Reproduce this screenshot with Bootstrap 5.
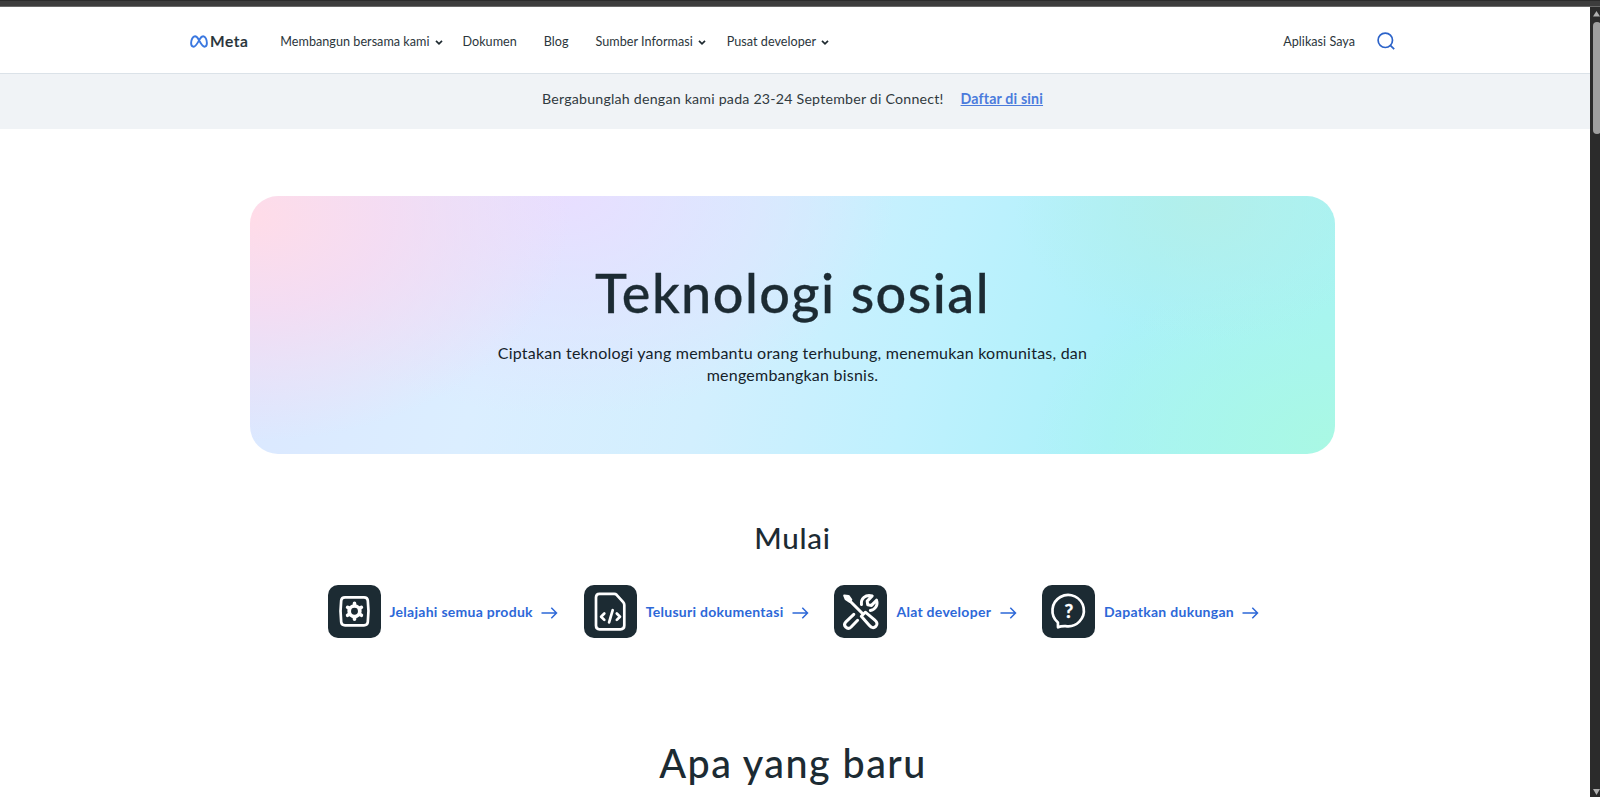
<!DOCTYPE html>
<html lang="id">
<head>
<meta charset="utf-8">
<meta name="viewport" content="width=device-width, initial-scale=1">
<title>Teknologi sosial</title>
<link href="https://cdn.jsdelivr.net/npm/bootstrap@5.3.0/dist/css/bootstrap.min.css" rel="stylesheet">
<style>
  :root { --ink: #1c2b33; --brand: #2d68d8; }
  body { font-family: Lato, "Open Sans", sans-serif; color: var(--ink); background: #fff; }
  .chrome-strip { height: 7px; flex: none; background: linear-gradient(#2b2b2b 0 1px, #3d3d3d 1px 6px, #6a6a6a 6px); }
  .site-header { height: 67px; border-bottom: 1px solid #dbe2e8; padding: 2px 195px 0 190px; }
  .wordmark { font-size: 15.6px; font-weight: 600; -webkit-text-stroke: .2px; letter-spacing: .55px; color: #273238; line-height: 20px; margin-left: 2px; }
  .site-header .nav-link { font-size: 12.6px; line-height: 20px; letter-spacing: .03px; color: #2b363c; padding: 2px 0 0; white-space: nowrap; }
  .n1 { margin-left: 32px; } .n2 { margin-left: 20px; } .n3, .n4 { margin-left: 27px; } .n5 { margin-left: 21px; }
  .chev { margin-left: 5px; }
  .search { margin-left: 22px; }
  .notice { height: 55px; background: #f0f3f6; font-size: 14.2px; letter-spacing: .215px; line-height: 20px; padding: 15px 5px 0 0; color: #303a40; }
  .notice a { color: #4b7bdc; font-weight: 700; letter-spacing: .16px; margin-left: 17px; }
  .content { padding: 67px 5px 0 0; }
  .hero { width: 1085px; height: 258px; border-radius: 28px; padding-top: 65px;
    background:
      radial-gradient(320px 225px at 0 8%, #ffdce8 0, #f9daf0cc 42%, #f0dcf500 100%),
      radial-gradient(330px 220px at 29% 0, #e8deff 0, #e4e0ffaa 42%, #e0e6ff00 100%),
      radial-gradient(190px 130px at 88% 5%, #b2efea 0, #b2efea00 100%),
      radial-gradient(300px 170px at 100% 95%, #a9f8e4 0, #a8f7e8aa 45%, #a8f3f200 100%),
      linear-gradient(105deg, #dbe8ff 4%, #dbeeff 24%, #d2effe 44%, #bff1fe 62%, #abf1f9 80%, #a8f4f2 96%); }
  .hero h1 { font-size: 54px; font-weight: 500; letter-spacing: 1.45px; line-height: 64px; margin: 0; -webkit-text-stroke: .3px; }
  .hero p { font-size: 16px; letter-spacing: .23px; line-height: 22.6px; margin: 16.5px 0 0; color: #15222a; }
  h2.start { font-size: 29.5px; font-weight: 500; letter-spacing: .8px; line-height: 36px; margin: 65.5px 0 0; }
  .quick { gap: 25.4px; margin-top: 29px; padding-left: 2px; }
  .quick a { color: var(--brand); font-size: 14px; font-weight: 700; letter-spacing: .28px; line-height: 20px; }
  .quick a > span { margin: 2px 8.5px 0 9px; }
  .quick a > svg:last-child { margin-top: 3px; }
  h2.news { font-size: 39.5px; font-weight: 500; letter-spacing: 1.45px; line-height: 48px; margin: 101.5px 0 0; padding-left: 1px; }
  .page { height: 790px; overflow: hidden; }
  .scroll-track { width: 10px; background: #2b2b2b; padding: 4px 0 2px 3px; }
  .scroll-thumb { height: 112px; width: 8px; border-radius: 4px; background: #9f9f9f; margin-top: 5px; }
</style>
</head>
<body class="overflow-hidden">
<div class="chrome-strip"></div>
<div class="page d-flex">
  <div class="flex-grow-1">
    <header class="site-header d-flex align-items-center">
      <a class="d-flex align-items-center text-decoration-none" href="#">
        <svg width="18" height="13" viewBox="0 0 18 13" fill="none" stroke="#3b78e0" stroke-width="1.9" stroke-linejoin="round"><path d="M8.8 4.9C7.7 2.8 6.6 1.3 5 1.3 2.7 1.3 1.1 4.7 1.1 8.1c0 2.2.9 3.6 2.5 3.6 1.8 0 2.9-1.7 5.2-5.8l.9-1.6C10.7 2.5 11.7 1.3 13.1 1.3c2.3 0 3.8 3.4 3.8 6.8 0 2.2-.8 3.6-2.4 3.6-1.7 0-2.7-1.5-4.8-5.1Z"/></svg>
        <span class="wordmark">Meta</span>
      </a>
      <nav class="nav flex-nowrap align-items-center">
        <a class="nav-link n1" href="#">Membangun bersama kami<svg class="chev" width="8" height="6" viewBox="0 0 8 6"><path d="M1 .8 4 3.800 7 .8" fill="none" stroke="#1f2a30" stroke-width="1.7"/></svg></a>
        <a class="nav-link n2" href="#">Dokumen</a>
        <a class="nav-link n3" href="#">Blog</a>
        <a class="nav-link n4" href="#">Sumber Informasi<svg class="chev" width="8" height="6" viewBox="0 0 8 6"><path d="M1 .8 4 3.800 7 .8" fill="none" stroke="#1f2a30" stroke-width="1.7"/></svg></a>
        <a class="nav-link n5" href="#">Pusat developer<svg class="chev" width="8" height="6" viewBox="0 0 8 6"><path d="M1 .8 4 3.800 7 .8" fill="none" stroke="#1f2a30" stroke-width="1.7"/></svg></a>
      </nav>
      <a class="nav-link ms-auto" href="#">Aplikasi Saya</a>
      <svg class="search" width="18" height="18" viewBox="0 0 18 18" fill="none" stroke="#2c63c9" stroke-width="1.7"><circle cx="8.3" cy="8.3" r="7.2"/><path d="m13.3 13.3 3.9 3.9"/></svg>
    </header>
    <div class="notice text-center"><span>Bergabunglah dengan kami pada 23-24 September di Connect!</span><a href="#">Daftar di sini</a></div>
    <main class="content d-flex flex-column align-items-center text-center">
      <section class="hero">
        <h1>Teknologi sosial</h1>
        <p>Ciptakan teknologi yang membantu orang terhubung, menemukan komunitas, dan<br>mengembangkan bisnis.</p>
      </section>
      <h2 class="start">Mulai</h2>
      <div class="quick d-flex justify-content-center">
        <a class="d-flex align-items-center text-decoration-none" href="#">
          <svg width="53" height="53" viewBox="0 0 53 53" fill="none" stroke="#fff" stroke-linejoin="round" stroke-linecap="round"><rect width="53" height="53" rx="10" fill="#1c2b33" stroke="none"/><path stroke-width="2.7" d="M17 12.300h19q3.400 0 3.800 3.200 1.400 10.800 0 21.600-.4 3.200-3.800 3.200H17q-3.400 0-3.800-3.200-1.400-10.800 0-21.600.4-3.200 3.800-3.200Z"/><circle cx="26.5" cy="26.3" r="5.3" stroke-width="3.7"/><path stroke-width="3.6" d="M26.500 18.300v2M26.500 32.300v2M19.600 22.300l1.700 1M31.700 29.300l1.700 1M33.400 22.300l-1.700 1M21.300 29.300l-1.700 1"/></svg>
          <span>Jelajahi semua produk</span>
          <svg width="17" height="12" viewBox="0 0 17 12" fill="none" stroke="#2d68d8" stroke-width="1.5"><path d="M.5 6h15M10.3.8 15.5 6l-5.2 5.2"/></svg>
        </a>
        <a class="d-flex align-items-center text-decoration-none" href="#">
          <svg width="53" height="53" viewBox="0 0 53 53" fill="none" stroke="#fff" stroke-linejoin="round" stroke-linecap="round"><rect width="53" height="53" rx="10" fill="#1c2b33" stroke="none"/><path stroke-width="2.7" d="M15.500 8.800h14.800q1.300 0 2.300 1l6.600 7.400q1.100 1.200 1.100 2.800v20.600q0 3.800-3.800 3.800h-21q-3.500 0-3.500-3.800V12.600q0-3.800 3.500-3.800Z"/><path stroke-width="2.7" d="m20.300 28.500-3.200 3.200 3.200 3.200M32.800 28.500l3.200 3.200-3.200 3.200M28.700 25.200l-3.600 12.200"/></svg>
          <span>Telusuri dokumentasi</span>
          <svg width="17" height="12" viewBox="0 0 17 12" fill="none" stroke="#2d68d8" stroke-width="1.5"><path d="M.5 6h15M10.3.8 15.5 6l-5.2 5.2"/></svg>
        </a>
        <a class="d-flex align-items-center text-decoration-none" href="#">
          <svg width="53" height="53" viewBox="0 0 53 53" fill="none" stroke="#fff" stroke-linejoin="round" stroke-linecap="round"><rect width="53" height="53" rx="10" fill="#1c2b33" stroke="none"/><path fill="#fff" stroke-width="2.2" d="m10.300 10.600 4.200.4 2.700 3.700-1.800 2-3.700-2.500Z"/><path stroke-width="3" d="m16.200 16.200 12 12"/><path stroke-width="3" d="m27.300 31.200 4-4 9.300 7.600q4.100 3.500 1.200 6.600-3 3-6.600-1.100Z"/><path stroke-width="3" d="m19.800 29.300-7.900 7.500q-2.700 2.800-.1 5.400 2.600 2.400 5.300-.2l6.500-6.700M27.500 19.600c-1-5.900 4-10.700 10.700-8.700l-5 5.200.5 3.600 3.800.7 5-5.200c1.800 5-1.500 9.700-6.200 10.200"/></svg>
          <span>Alat developer</span>
          <svg width="17" height="12" viewBox="0 0 17 12" fill="none" stroke="#2d68d8" stroke-width="1.5"><path d="M.5 6h15M10.3.8 15.5 6l-5.2 5.2"/></svg>
        </a>
        <a class="d-flex align-items-center text-decoration-none" href="#">
          <svg width="53" height="53" viewBox="0 0 53 53" fill="none" stroke="#fff" stroke-linejoin="round" stroke-linecap="round"><rect width="53" height="53" rx="10" fill="#1c2b33" stroke="none"/><path stroke-width="2.7" d="M16 42.300 15.900 37.500A15.700 15.700 0 1 1 23.600 41.100Q19 40.900 16 42.300Z"/><text x="26.800" y="32.700" text-anchor="middle" fill="#fff" stroke="#fff" stroke-width=".4" font-weight="700" font-size="19" letter-spacing="0">?</text></svg>
          <span>Dapatkan dukungan</span>
          <svg width="17" height="12" viewBox="0 0 17 12" fill="none" stroke="#2d68d8" stroke-width="1.5"><path d="M.5 6h15M10.3.8 15.5 6l-5.2 5.2"/></svg>
        </a>
      </div>
      <h2 class="news">Apa yang baru</h2>
    </main>
  </div>
  <div class="scroll-track d-flex flex-column overflow-hidden">
    <svg width="7" height="6" viewBox="0 0 7 6" fill="#b0b0b0"><path d="M3.5 0 7 5.5H0Z"/></svg>
    <div class="scroll-thumb"></div>
    <svg class="mt-auto" width="7" height="6" viewBox="0 0 7 6" fill="#b0b0b0"><path d="M0 0h7L3.5 6Z"/></svg>
  </div>
</div>
<script src="https://cdn.jsdelivr.net/npm/bootstrap@5.3.0/dist/js/bootstrap.bundle.min.js"></script>
</body>
</html>
